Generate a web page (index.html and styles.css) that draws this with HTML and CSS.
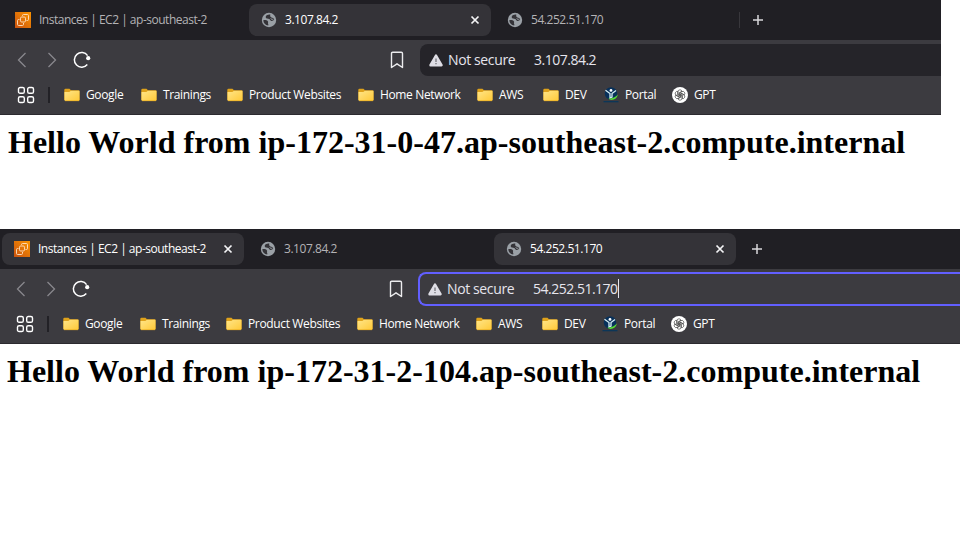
FILE: index.html
```
<!DOCTYPE html>
<html lang="en">
<head>
<meta charset="utf-8">
<title>54.252.51.170</title>
<link rel="stylesheet" href="styles.css">
</head>
<body>
<svg class="defs" width="0" height="0">
  <defs>
    <linearGradient id="orange" x1="0" y1="1" x2="1" y2="0"><stop offset="0" stop-color="#c95210"/><stop offset="1" stop-color="#fb9400"/></linearGradient>
    <linearGradient id="yellow" x1="0" y1="0" x2="1" y2="1"><stop offset="0" stop-color="#ffe588"/><stop offset="1" stop-color="#ffc937"/></linearGradient>
  </defs>
  <symbol id="ec2" viewBox="0 0 16 16"><rect width="16" height="16" fill="url(#orange)"/><g fill="none" stroke="#ffe3c4" stroke-width=".9"><rect x="5.500" y="5" width="5" height="5" rx="1.200"/><path d="M7.500 4V3.600Q7.500 2.500 8.600 2.500H12.400Q13.500 2.500 13.500 3.600V7.400Q13.500 8.500 12.400 8.500H11.500M4.500 7.500H3.600Q2.500 7.500 2.500 8.600V12.400Q2.500 13.500 3.600 13.500H7.400Q8.500 13.500 8.500 12.400V11"/></g></symbol>
  <symbol id="globe" viewBox="0 0 16 16"><circle cx="8" cy="8" r="7.200" fill="#9aa0a6"/><path d="M9.300 2.600C6.600 2.400 4.600 3.500 4.700 5.200C4.900 6.900 7 6.500 8.300 7.100C9.300 7.600 9 8.700 10.300 8.900C11.600 9.100 12.600 8.300 13.200 7.600C12.900 6 11.600 5.600 10.400 5.500C9.300 5.300 9 4 9.300 2.600ZM2.300 8.200C4 7.900 6.400 8.300 7 9.500C7.400 10.400 6.700 10.900 7.100 11.700C7.400 12.300 7.600 12.900 7.200 13.500C4.300 13.200 2.400 10.900 2.300 8.200Z" fill="#343338"/><path d="M10.400 3.400C10.400 4.500 11.300 4.900 12.200 4.900M9.800 6.400C9.900 7.500 11.400 7.600 12.400 7" fill="none" stroke="#9aa0a6" stroke-width="1"/></symbol>
  <symbol id="close" viewBox="0 0 10 10"><path d="M1.500 1.500l7 7M8.500 1.500l-7 7" stroke="#f4f4f6" stroke-width="1.700"/></symbol>
  <symbol id="plus" viewBox="0 0 12 12"><path d="M6 1v10M1 6h10" stroke="#d8d8da" stroke-width="1.500"/></symbol>
  <symbol id="back" viewBox="0 0 10 16"><path d="M8.500 1L1.500 8l7 7" fill="none" stroke="#89888d" stroke-width="1.300"/></symbol>
  <symbol id="forward" viewBox="0 0 10 16"><path d="M1.500 1l7 7-7 7" fill="none" stroke="#89888d" stroke-width="1.300"/></symbol>
  <symbol id="reload" viewBox="0 0 18 18"><path d="M14.300 13.500A7.300 7.300 0 1 1 14.600 4.600" fill="none" stroke="#fff" stroke-width="1.500"/><circle cx="15.200" cy="7.200" r="2.100" fill="#fff"/></symbol>
  <symbol id="mark" viewBox="0 0 14 18"><path d="M1.500 16.500V2.500Q1.500 1.300 2.700 1.300H11.300Q12.500 1.300 12.500 2.500V16.500L7 12.800Z" fill="none" stroke="#ececee" stroke-width="1.400" stroke-linejoin="round"/></symbol>
  <symbol id="warn" viewBox="0 0 14 13"><path d="M7 1.500L12.500 11.200H1.500Z" fill="#dfdee5" stroke="#dfdee5" stroke-width="2.400" stroke-linejoin="round"/><path d="M7 4.500v3.500M7 9v1.300" stroke="#6b6a70" stroke-width="1.200"/></symbol>
  <symbol id="apps" viewBox="0 0 18 18"><g fill="none" stroke="#fff" stroke-width="1.400"><rect x="1.500" y="1.500" width="5.800" height="5.800" rx="1.600"/><rect x="10.700" y="1.500" width="5.800" height="5.800" rx="1.600"/><rect x="1.500" y="10.700" width="5.800" height="5.800" rx="1.600"/><rect x="10.700" y="10.700" width="5.800" height="5.800" rx="1.600"/></g></symbol>
  <symbol id="folder" viewBox="0 0 16 16"><path d="M.3 3Q.3 1.700 1.500 1.700H5.500L7 3.300H14.500Q15.500 3.300 15.500 4.300V13H.3Z" fill="#dfa21b"/><path d="M.5 5H5.300L7 3.800H15.500V13Q15.500 14 14.500 14H1.500Q.5 14 .5 13Z" fill="url(#yellow)"/><path d="M1 13.700H15" stroke="#e8ac20" stroke-width=".7"/></symbol>
  <symbol id="portal" viewBox="0 0 16 16"><circle cx="8" cy="6.500" r="6.200" fill="#07305a"/><circle cx="8" cy="3.400" r="1.400" fill="#fff"/><path d="M2.500 3.200L7 6.500V11L9 10V6.500L13 3.400" fill="none" stroke="#d5eef4" stroke-width="1.300"/><path d="M5.500 11.300Q10.500 12 15 7.500Q13.500 12.700 8.500 13Q6 12.800 5.500 11.300Z" fill="#58df35"/><path d="M.5 14.700H15.500" stroke="#07365c" stroke-width="1.200"/></symbol>
  <symbol id="gpt" viewBox="0 0 16 16"><circle cx="8" cy="8" r="8" fill="#fff"/><g fill="none" stroke="#303030" stroke-width=".6"><path id="petal" d="M6 8V4.800Q6 2.800 8 2.800Q9.500 2.800 10 4.200L7.200 5.900V9"/><use href="#petal" transform="rotate(60 8 8)"/><use href="#petal" transform="rotate(120 8 8)"/><use href="#petal" transform="rotate(180 8 8)"/><use href="#petal" transform="rotate(240 8 8)"/><use href="#petal" transform="rotate(300 8 8)"/></g></symbol>
</svg>

<section class="window first">
  <header class="tabs">
    <div class="tab"><svg class="i16"><use href="#ec2"/></svg><span class="title">Instances | EC2 | ap-southeast-2</span></div>
    <div class="tab active"><svg class="i16"><use href="#globe"/></svg><span class="title ip">3.107.84.2</span><svg class="close"><use href="#close"/></svg></div>
    <div class="tab"><svg class="i16"><use href="#globe"/></svg><span class="title ip">54.252.51.170</span></div>
    <i class="tab-divider"></i><svg class="plus"><use href="#plus"/></svg>
  </header>
  <div class="toolbar">
    <svg class="arrow"><use href="#back"/></svg><svg class="arrow next"><use href="#forward"/></svg><svg class="reload"><use href="#reload"/></svg><svg class="mark"><use href="#mark"/></svg>
    <div class="address"><svg class="warn"><use href="#warn"/></svg><span class="secure">Not secure</span><span class="url">3.107.84.2</span></div>
  </div>
  <nav class="bookmarks">
    <svg class="apps"><use href="#apps"/></svg><i class="bar"></i>
    <div class="links">
      <a><svg class="i16"><use href="#folder"/></svg><span>Google</span></a>
      <a><svg class="i16"><use href="#folder"/></svg><span>Trainings</span></a>
      <a><svg class="i16"><use href="#folder"/></svg><span>Product Websites</span></a>
      <a><svg class="i16"><use href="#folder"/></svg><span>Home Network</span></a>
      <a><svg class="i16"><use href="#folder"/></svg><span>AWS</span></a>
      <a><svg class="i16"><use href="#folder"/></svg><span>DEV</span></a>
      <a><svg class="i16"><use href="#portal"/></svg><span>Portal</span></a>
      <a><svg class="i16"><use href="#gpt"/></svg><span>GPT</span></a>
    </div>
  </nav>
</section>
<main class="page"><h1>Hello World from ip-172-31-0-47.ap-southeast-2.compute.internal</h1></main>

<section class="window second">
  <header class="tabs">
    <div class="tab active"><svg class="i16"><use href="#ec2"/></svg><span class="title">Instances | EC2 | ap-southeast-2</span><svg class="close"><use href="#close"/></svg></div>
    <div class="tab"><svg class="i16"><use href="#globe"/></svg><span class="title ip">3.107.84.2</span></div>
    <div class="tab active"><svg class="i16"><use href="#globe"/></svg><span class="title ip">54.252.51.170</span><svg class="close"><use href="#close"/></svg></div>
    <i class="tab-divider clear"></i><svg class="plus"><use href="#plus"/></svg>
  </header>
  <div class="toolbar">
    <svg class="arrow"><use href="#back"/></svg><svg class="arrow next"><use href="#forward"/></svg><svg class="reload"><use href="#reload"/></svg><svg class="mark"><use href="#mark"/></svg>
    <div class="address focus"><svg class="warn"><use href="#warn"/></svg><span class="secure">Not secure</span><span class="url">54.252.51.170</span><i class="caret"></i></div>
  </div>
  <nav class="bookmarks">
    <svg class="apps"><use href="#apps"/></svg><i class="bar"></i>
    <div class="links">
      <a><svg class="i16"><use href="#folder"/></svg><span>Google</span></a>
      <a><svg class="i16"><use href="#folder"/></svg><span>Trainings</span></a>
      <a><svg class="i16"><use href="#folder"/></svg><span>Product Websites</span></a>
      <a><svg class="i16"><use href="#folder"/></svg><span>Home Network</span></a>
      <a><svg class="i16"><use href="#folder"/></svg><span>AWS</span></a>
      <a><svg class="i16"><use href="#folder"/></svg><span>DEV</span></a>
      <a><svg class="i16"><use href="#portal"/></svg><span>Portal</span></a>
      <a><svg class="i16"><use href="#gpt"/></svg><span>GPT</span></a>
    </div>
  </nav>
</section>
<main class="page shifted"><h1>Hello World from ip-172-31-2-104.ap-southeast-2.compute.internal</h1></main>
</body>
</html>
```
FILE: styles.css
```
* { box-sizing: border-box; }
html, body { margin: 0; height: 543px; overflow: hidden; background: #fff; }
body { display: flex; flex-direction: column; }
svg { display: block; flex: none; }
.defs { position: absolute; }
.i16 { width: 16px; height: 16px; }

.window {
  flex: none;
  height: 115px;
  background: #3c3b40;
  border-bottom: 1px solid #2b2a2f;
  overflow: hidden;
  font: 12px/16px "Open Sans", "Noto Sans", sans-serif;
  color: #fff;
  white-space: nowrap;
}
.first { width: 941px; }
.second { width: 960px; }
.second > * { margin-left: -1px; }

.tabs { display: flex; align-items: center; height: 40px; padding-left: 3px; background: #201f24; }
.tab {
  display: flex;
  align-items: center;
  flex: none;
  width: 242px;
  height: 32px;
  margin-right: 4px;
  padding: 0 11px 0 12px;
  border-radius: 8px;
  color: #b4b3b6;
}
.tab.active { background: #343338; color: #fff; }
.title { margin-left: 8px; letter-spacing: -0.49px; }
.ip { letter-spacing: -0.45px; }
.close { width: 10px; height: 10px; margin-left: auto; }
.tab-divider { width: 1px; height: 16px; margin-left: -2px; background: #38373c; }
.tab-divider.clear { background: transparent; }
.plus { width: 12px; height: 12px; margin-left: 12px; }

.toolbar { display: flex; align-items: center; height: 40px; padding-left: 17px; }
.arrow { width: 10px; height: 16px; }
.next { margin-left: 20px; }
.reload { width: 18px; height: 18px; margin-left: 16px; }
.mark { width: 14px; height: 18px; margin-left: 299px; }
.address {
  display: flex;
  align-items: center;
  flex: 1;
  height: 32px;
  margin-left: 16px;
  padding-left: 9px;
  border-radius: 8px 0 0 8px;
  background: #252429;
  font-size: 14px;
  line-height: 20px;
}
.focus { height: 34px; margin-left: 15px; padding-left: 8px; border: 2px solid #625fff; border-right: 0; background: #3c3b40; }
.warn { width: 14px; height: 13px; }
.secure { width: 86px; margin-left: 5px; color: #e6e5ed; letter-spacing: -0.38px; }
.url { color: #e6e5ed; letter-spacing: -0.5px; }
.caret { width: 1px; height: 19px; margin-top: -2px; background: #e6e5ed; }

.bookmarks { display: flex; align-items: center; height: 30px; padding-left: 17px; }
.apps { width: 18px; height: 18px; }
.bar { width: 2px; height: 16px; margin-left: 13px; background: #222126; }
.links { display: grid; grid-template-columns: 77px 86px 131px 119px 66px 60px 69px 60px; margin-left: 14px; }
.links a { display: flex; align-items: center; gap: 6px; letter-spacing: -0.36px; }

.page { flex: none; height: 114px; padding: 9px 0 0 8px; }
.shifted { padding-left: 7px; }
h1 { margin: 0; font: bold 32px/37px "Liberation Serif", "Times New Roman", serif; letter-spacing: 0.01px; color: #000; white-space: nowrap; }
```
